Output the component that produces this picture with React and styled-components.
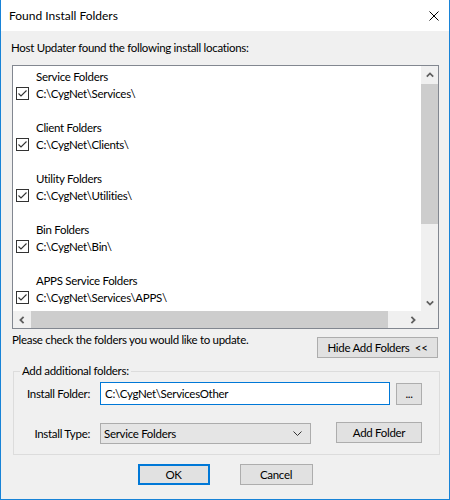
import styled, { createGlobalStyle } from "styled-components";

const GlobalStyle = createGlobalStyle`
  html, body {
    margin: 0;
    padding: 0;
    background: #ffffff;
  }
  body {
    font-family: "Segoe UI", Lato, "Noto Sans", sans-serif;
    font-size: 11.5px;
    letter-spacing: -0.3px;
    color: #000000;
  }
  * {
    box-sizing: border-box;
  }
`;

const Window = styled.div`
  width: 450px;
  height: 500px;
  border: 1px solid #1883d7;
  border-top: none;
  display: flex;
  flex-direction: column;
  background: #f0f0f0;
`;

const TitleBar = styled.div`
  height: 31px;
  flex: none;
  background: #ffffff;
  display: flex;
  align-items: center;
  justify-content: space-between;
  padding: 0 10px 0 8px;
  line-height: 16px;
  font-size: 12px;
  letter-spacing: 0;
`;

const CloseButton = styled.div`
  width: 10px;
  height: 10px;
  display: flex;
  margin-top: 1px;
`;

const Body = styled.div`
  flex: 1;
  display: flex;
  flex-direction: column;
  padding: 0 10px 0 11px;
`;

const Caption = styled.div`
  line-height: 16px;
  margin: ${(p) => p.$top || 0}px 0 0 ${(p) => p.$left || 0}px;
  white-space: nowrap;
`;

const ListBox = styled.div`
  margin-top: 9px;
  height: 264px;
  border: 1px solid #828790;
  background: #ffffff;
  display: grid;
  grid-template-columns: 1fr 17px;
  grid-template-rows: 1fr 17px;
  overflow: hidden;
`;

const ListContent = styled.div`
  padding: 2px 0 0 3px;
  overflow: hidden;
`;

const Group = styled.div`
  margin-bottom: 17px;
`;

const GroupLabel = styled.div`
  height: 17px;
  line-height: 17px;
  padding-left: 20px;
  white-space: nowrap;
`;

const CheckRow = styled.div`
  height: 17px;
  line-height: 17px;
  display: flex;
  align-items: center;
  gap: 7px;
  white-space: nowrap;
`;

const CheckBox = styled.span`
  width: 13px;
  height: 13px;
  flex: none;
  border: 1px solid #333333;
  background: #ffffff;
  display: flex;
  align-items: center;
  justify-content: center;
`;

const VScroll = styled.div`
  background: #f0f0f0;
  display: flex;
  flex-direction: column;
`;

const HScroll = styled.div`
  background: #f0f0f0;
  display: flex;
`;

const Corner = styled.div`
  background: #f0f0f0;
`;

const ArrowButton = styled.div`
  width: 17px;
  height: 17px;
  flex: none;
  display: flex;
  align-items: center;
  justify-content: center;
`;

const Thumb = styled.div`
  background: #cdcdcd;
  ${(p) =>
    p.$vertical
      ? `height: ${p.$size}px; margin-top: 1px;`
      : `width: ${p.$size}px; margin-left: 1px;`}
`;

const Track = styled.div`
  flex: 1;
`;

const StatusRow = styled.div`
  display: flex;
  justify-content: space-between;
  align-items: flex-start;
  margin-top: 3px;
`;

const Button = styled.button`
  font: inherit;
  letter-spacing: inherit;
  color: #000000;
  height: ${(p) => p.$h || 21}px;
  width: ${(p) => p.$w}px;
  background: #e1e1e1;
  border: 1px solid #adadad;
  padding: 0;
  line-height: 16px;
  white-space: pre;
  flex: none;
`;

const DefaultButton = styled(Button)`
  border: 2px solid #0078d7;
`;

const HideButton = styled(Button)`
  margin: 5px 1px 0 0;
`;

const GroupBox = styled.fieldset`
  margin: 5px -1px 0 1px;
  padding: 0 0 10px 0;
  border: 1px solid #dcdcdc;
  min-width: 0;
`;

const Legend = styled.legend`
  margin-left: 6px;
  padding: 0 2px;
  line-height: 16px;
`;

const FormRow = styled.div`
  display: flex;
  align-items: center;
  margin-top: ${(p) => p.$top}px;
`;

const FieldLabel = styled.div`
  width: 76px;
  text-align: right;
  margin-right: 10px;
  white-space: nowrap;
`;

const TextInput = styled.div`
  width: 290px;
  height: 23px;
  border: 1px solid #0078d7;
  background: #ffffff;
  padding-left: 4px;
  line-height: 21px;
  white-space: nowrap;
`;

const Select = styled.div`
  width: 211px;
  height: 21px;
  margin-top: 1px;
  border: 1px solid #acacac;
  background: #e5e5e5;
  padding: 0 8px 0 3px;
  display: flex;
  align-items: center;
  justify-content: space-between;
  line-height: 19px;
`;

const Footer = styled.div`
  display: flex;
  justify-content: center;
  gap: 30px;
  margin: 9px 0 0 -1px;
`;

const Chevron = ({ dir }) => {
  const pts = {
    up: "0.8,4.6 4,1.4 7.2,4.6",
    down: "0.8,1.4 4,4.6 7.2,1.4",
    left: "4.6,0.8 1.4,4 4.6,7.2",
    right: "1.4,0.8 4.6,4 1.4,7.2",
  }[dir];
  const vertical = dir === "up" || dir === "down";
  return (
    <svg width={vertical ? 8 : 6} height={vertical ? 6 : 8} viewBox={vertical ? "0 0 8 6" : "0 0 6 8"}>
      <polyline points={pts} fill="none" stroke="#606060" strokeWidth="1.8" />
    </svg>
  );
};

const folders = [
  ["Service Folders", "C:\\CygNet\\Services\\"],
  ["Client Folders", "C:\\CygNet\\Clients\\"],
  ["Utility Folders", "C:\\CygNet\\Utilities\\"],
  ["Bin Folders", "C:\\CygNet\\Bin\\"],
  ["APPS Service Folders", "C:\\CygNet\\Services\\APPS\\"],
];

export default function App() {
  return (
    <>
      <GlobalStyle />
      <Window>
        <TitleBar>
          <span>Found Install Folders</span>
          <CloseButton>
            <svg width="10" height="10" viewBox="0 0 10 10">
              <path d="M0.5 0.5 L9.5 9.5 M9.5 0.5 L0.5 9.5" stroke="#000" strokeWidth="1" />
            </svg>
          </CloseButton>
        </TitleBar>
        <Body>
          <Caption $top={9} $left={-1}>
            Host Updater found the following install locations:
          </Caption>
          <ListBox>
            <ListContent>
              {folders.map(([label, path]) => (
                <Group key={path}>
                  <GroupLabel>{label}</GroupLabel>
                  <CheckRow>
                    <CheckBox>
                      <svg width="11" height="11" viewBox="0 0 11 11">
                        <polyline points="1.5,5.5 4,8 9.5,2.5" fill="none" stroke="#333" strokeWidth="1.1" />
                      </svg>
                    </CheckBox>
                    {path}
                  </CheckRow>
                </Group>
              ))}
            </ListContent>
            <VScroll>
              <ArrowButton>
                <Chevron dir="up" />
              </ArrowButton>
              <Thumb $vertical $size={140} />
              <Track />
              <ArrowButton>
                <Chevron dir="down" />
              </ArrowButton>
            </VScroll>
            <HScroll>
              <ArrowButton>
                <Chevron dir="left" />
              </ArrowButton>
              <Thumb $size={357} />
              <Track />
              <ArrowButton>
                <Chevron dir="right" />
              </ArrowButton>
            </HScroll>
            <Corner />
          </ListBox>
          <StatusRow>
            <Caption>Please check the folders you would like to update.</Caption>
            <HideButton $w={121}>{"Hide Add Folders  <<"}</HideButton>
          </StatusRow>
          <GroupBox>
            <Legend>Add additional folders:</Legend>
            <FormRow $top={3}>
              <FieldLabel>Install Folder:</FieldLabel>
              <TextInput>C:\CygNet\ServicesOther</TextInput>
              <Button $w={26} $h={22} style={{ marginLeft: 6 }}>
                ...
              </Button>
            </FormRow>
            <FormRow $top={17}>
              <FieldLabel>Install Type:</FieldLabel>
              <Select>
                <span>Service Folders</span>
                <svg width="9" height="5" viewBox="0 0 9 5">
                  <polyline points="0.5,0.5 4.5,4.5 8.5,0.5" fill="none" stroke="#333" strokeWidth="1" />
                </svg>
              </Select>
              <Button $w={86} style={{ marginLeft: 25, alignSelf: "flex-start" }}>
                Add Folder
              </Button>
            </FormRow>
          </GroupBox>
          <Footer>
            <DefaultButton $w={72}>OK</DefaultButton>
            <Button $w={73}>Cancel</Button>
          </Footer>
        </Body>
      </Window>
    </>
  );
}
